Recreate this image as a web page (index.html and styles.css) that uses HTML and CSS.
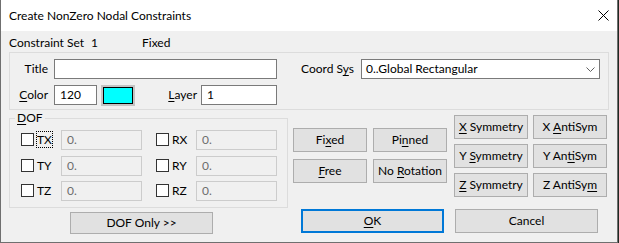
FILE: index.html
```html
<!DOCTYPE html>
<html>
<head>
<meta charset="utf-8">
<link rel="stylesheet" href="styles.css">
</head>
<body>
<div class="window">
  <div class="titlebar">
    <span class="title">Create NonZero Nodal Constraints</span>
    <svg class="close" width="11" height="11" viewBox="0 0 11 11"><path d="M0.5 0.5 L10.5 10.5 M10.5 0.5 L0.5 10.5" stroke="#000" stroke-width="1" fill="none"/></svg>
  </div>
  <div class="client">
    <div class="info">
      <span class="info-a">Constraint Set</span><span class="info-b">1</span><span class="info-c">Fixed</span>
    </div>
    <div class="group">
      <div class="row">
        <span class="lbl lbl-left">Title</span>
        <span class="edit edit-title"></span>
        <span class="lbl lbl-cs">Coord S<u>y</u>s</span>
        <span class="combo"><span class="combo-text">0..Global Rectangular</span><svg class="chev" width="9" height="5" viewBox="0 0 9 5"><path d="M0.5 0.5 L4.5 4.5 L8.5 0.5" stroke="#606060" stroke-width="1" fill="none"/></svg></span>
      </div>
      <div class="row">
        <span class="lbl lbl-left"><u>C</u>olor</span>
        <span class="edit edit-color">120</span>
        <span class="swatch"><span class="swatch-in"></span></span>
        <span class="lbl lbl-layer"><u>L</u>ayer</span>
        <span class="edit edit-layer">1</span>
      </div>
    </div>
    <div class="mid">
      <fieldset class="dof">
        <legend><u>D</u>OF</legend>
        <div class="dof-grid">
          <div class="cell"><span class="chk"></span><span class="clbl"><span class="focus">TX</span></span><span class="dis">0.</span></div>
          <div class="cell"><span class="chk"></span><span class="clbl">RX</span><span class="dis">0.</span></div>
          <div class="cell"><span class="chk"></span><span class="clbl">TY</span><span class="dis">0.</span></div>
          <div class="cell"><span class="chk"></span><span class="clbl">RY</span><span class="dis">0.</span></div>
          <div class="cell"><span class="chk"></span><span class="clbl">TZ</span><span class="dis">0.</span></div>
          <div class="cell"><span class="chk"></span><span class="clbl">RZ</span><span class="dis">0.</span></div>
        </div>
      </fieldset>
      <div class="btns2">
        <span class="btn">Fi<u>x</u>ed</span>
        <span class="btn">Pi<u>n</u>ned</span>
        <span class="btn"><u>F</u>ree</span>
        <span class="btn">No <u>R</u>otation</span>
      </div>
      <div class="btns3">
        <span class="btn"><u>X</u> Symmetry</span>
        <span class="btn">X <u>A</u>ntiSym</span>
        <span class="btn">Y <u>S</u>ymmetry</span>
        <span class="btn">Y An<u>t</u>iSym</span>
        <span class="btn"><u>Z</u> Symmetry</span>
        <span class="btn">Z AntiSy<u>m</u></span>
      </div>
    </div>
    <div class="bottom">
      <span class="btn btn-dof">DOF Only &gt;&gt;</span>
      <span class="btn btn-ok"><u>O</u>K</span>
      <span class="btn btn-cancel">Cancel</span>
    </div>
  </div>
</div>
</body>
</html>
```

FILE: styles.css
```css
html, body {
  margin: 0;
  padding: 0;
}
body {
  background: #1f2a22;
  font-family: "Lato", "Noto Sans", sans-serif;
  font-size: 12px;
  line-height: 16px;
  color: #000;
  width: 619px;
  height: 243px;
  overflow: hidden;
}
u {
  text-decoration: underline;
  text-underline-offset: 2px;
  text-decoration-thickness: 1px;
}
.window {
  width: 616px;
  height: 242px;
  border: 1px solid #6f6f6f;
  border-top: none;
  background: #f0f0f0;
  display: flex;
  flex-direction: column;
}
.titlebar {
  height: 31px;
  background: #fff;
  display: flex;
  align-items: center;
  justify-content: space-between;
  padding: 0 8px 0 8px;
  flex: none;
}
.close {
  display: block;
}
.client {
  padding: 0 8px;
  flex: 1;
}
.info {
  display: flex;
  margin-top: 4px;
  height: 16px;
  margin-bottom: 1px;
}
.info-a { width: 82px; }
.info-b { width: 51px; }
.group {
  border: 1px solid #dcdcdc;
  padding: 6px 0 4px 0;
  display: flex;
  flex-direction: column;
  gap: 6px;
}
.row {
  display: flex;
  align-items: center;
  height: 20px;
}
.lbl {
  display: block;
  text-align: right;
  flex: none;
  white-space: nowrap;
}
.lbl-left {
  width: 38px;
  margin-right: 6px;
}
.lbl-cs {
  width: 77px;
  margin-right: 7px;
}
.lbl-layer {
  width: 62px;
  margin-right: 4px;
}
.edit {
  display: block;
  box-sizing: border-box;
  height: 20px;
  border: 1px solid #7a7a7a;
  background: #fff;
  padding: 1px 5px;
  flex: none;
}
.edit-title { width: 223px; }
.edit-color { width: 43px; }
.edit-layer { width: 76px; }
.swatch {
  display: block;
  box-sizing: border-box;
  width: 34px;
  height: 21px;
  border: 2px solid #c4c4c4;
  margin-left: 4px;
  flex: none;
}
.swatch-in {
  display: block;
  width: 100%;
  height: 100%;
  box-sizing: border-box;
  border: 1px solid #000;
  background: #00ffff;
}
.combo {
  display: flex;
  align-items: center;
  justify-content: space-between;
  box-sizing: border-box;
  width: 239px;
  height: 20px;
  border: 1px solid #7a7a7a;
  background: #fff;
  padding: 0 4px 0 4px;
  flex: none;
}
.chev {
  display: block;
  margin-top: 1px;
}
.mid {
  display: flex;
  align-items: flex-start;
}
.dof {
  margin: 0;
  padding: 0;
  border: 1px solid #dcdcdc;
  width: 277px;
  min-width: 0;
  flex: none;
}
.dof legend {
  padding: 0 2px;
  margin-left: 5px;
  line-height: 16px;
}
.dof-grid {
  display: grid;
  grid-template-columns: 121px 121px;
  column-gap: 14px;
  row-gap: 5.5px;
  padding: 4px 10px 6px 11px;
}
.cell {
  display: flex;
  align-items: center;
  height: 20px;
}
.chk {
  display: block;
  box-sizing: border-box;
  width: 13px;
  height: 13px;
  border: 1px solid #333;
  background: #fff;
  margin-right: 3px;
  margin-top: -1px;
  flex: none;
}
.clbl {
  width: 24px;
  flex: none;
}
.focus {
  outline: 1px dotted #000;
  outline-offset: 0;
}
.dis {
  display: block;
  box-sizing: border-box;
  width: 81px;
  height: 20px;
  border: 1px solid #cccccc;
  background: #f0f0f0;
  color: #6d6d6d;
  padding: 1px 5px;
  flex: none;
}
.btn {
  display: block;
  text-align: center;
  box-sizing: border-box;
  background: #e1e1e1;
  border: 1px solid #adadad;
  white-space: nowrap;
  line-height: 22px;
}
.btns2 {
  display: grid;
  grid-template-columns: 74px 74px;
  grid-auto-rows: 24px;
  column-gap: 6px;
  row-gap: 7px;
  margin-top: 18px;
  margin-left: 5px;
}
.btns3 {
  display: grid;
  grid-template-columns: 74px 74px;
  grid-auto-rows: 24px;
  column-gap: 5px;
  row-gap: 5px;
  margin-top: 5px;
  margin-left: 7px;
}
.bottom {
  display: flex;
  align-items: flex-start;
}
.btn-dof {
  width: 143px;
  height: 22px;
  line-height: 20px;
  margin-top: 4px;
  margin-left: 61px;
}
.btn-ok {
  width: 143px;
  height: 24px;
  line-height: 20px;
  margin-top: 1px;
  margin-left: 88px;
  border: 2px solid #0078d7;
}
.btn-cancel {
  width: 143px;
  height: 24px;
  margin-top: 1px;
  margin-left: 11px;
}
```
